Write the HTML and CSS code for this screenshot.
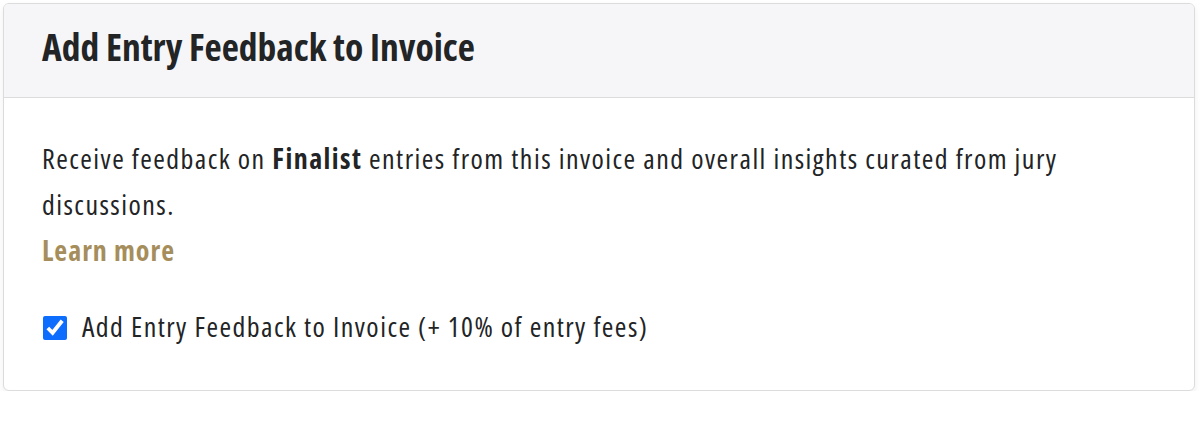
FILE: index.html
```html
<!DOCTYPE html>
<html lang="en">
<head>
<meta charset="utf-8">
<title>Add Entry Feedback to Invoice</title>
<link rel="stylesheet" href="styles.css">
</head>
<body>
<section class="card">
  <header class="card-header">
    <h2 class="card-title">Add Entry Feedback to Invoice</h2>
  </header>
  <div class="card-body">
    <p class="desc">Receive feedback on <strong>Finalist</strong> entries from this invoice and overall insights curated from jury discussions.</p>
    <a class="learn" href="#">Learn more</a>
    <label class="check-row">
      <input type="checkbox" class="check" checked>
      <span class="check-label">Add Entry Feedback to Invoice (+ 10% of entry fees)</span>
    </label>
  </div>
</section>
</body>
</html>
```

FILE: styles.css
```css
html, body {
  margin: 0;
  background: #ffffff;
}
body {
  padding: 3px 5px 0 3px;
  font-family: "Open Sans", "DejaVu Sans Condensed", sans-serif;
  font-stretch: 75%;
  color: #222426;
}
.card {
  border: 1px solid #dcdcdc;
  border-radius: 6px;
  box-shadow: 0 3px 6px rgba(0, 0, 0, 0.07);
  overflow: hidden;
  background: #fff;
}
.card-header {
  background: #f6f6f8;
  border-bottom: 1px solid #dcdcdc;
  height: 94px;
  box-sizing: border-box;
  display: flex;
  align-items: center;
  padding: 0 38px 8px;
}
.card-title {
  margin: 0;
  font-size: 37.5px;
  font-weight: 700;
  line-height: 1.2;
  color: #222426;
}
.card-body {
  padding: 37px 38px 41px;
}
.desc {
  margin: 0;
  font-size: 28px;
  letter-spacing: 1.45px;
  line-height: 46px;
}
.desc strong {
  font-weight: 700;
}
.learn {
  display: block;
  font-size: 28px;
  letter-spacing: 1px;
  line-height: 46px;
  font-weight: 700;
  color: #a68e5c;
  text-decoration: none;
}
.check-row {
  display: flex;
  align-items: center;
  gap: 15px;
  margin-top: 30px;
  height: 46px;
  font-size: 28px;
  letter-spacing: 1.45px;
}
.check {
  margin: 4px 0 0 1px;
  width: 24px;
  height: 24px;
  accent-color: #0d6efd;
}
```
